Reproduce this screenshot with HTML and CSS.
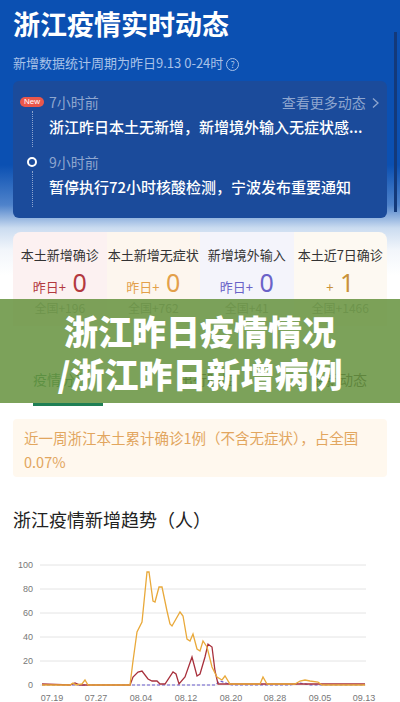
FILE: index.html
```html
<!DOCTYPE html>
<html lang="zh-CN">

<head>
    <meta charset="UTF-8">
    <meta name="viewport" content="width=device-width, initial-scale=1.0">
    <title>浙江疫情实时动态</title>
    <link rel="stylesheet" href="styles.css">
</head>

<body>

    <!-- Header with live updates -->
    <div class="hero">
        <h1 class="hero-title">浙江疫情实时动态</h1>
        <p class="hero-sub">新增数据统计周期为昨日9.13 0-24时 <span class="help">?</span></p>

        <div class="timeline">
            <div class="item">
                <div class="marker"><span class="badge-new">New</span></div>
                <div class="item-head">
                    <span class="time">7小时前</span>
                    <span class="more">查看更多动态
                        <svg width="9" height="12" viewBox="0 0 9 12"><path d="M2 1.5 L7 6 L2 10.5" fill="none" stroke="#8ea6cf" stroke-width="1.3"/></svg>
                    </span>
                </div>
                <div class="rail"></div>
                <div class="item-text">浙江昨日本土无新增，新增境外输入无症状感...</div>
            </div>
            <div class="item">
                <div class="marker"><span class="ring"></span></div>
                <div class="item-head">
                    <span class="time">9小时前</span>
                </div>
                <div class="rail"></div>
                <div class="item-text">暂停执行72小时核酸检测，宁波发布重要通知</div>
            </div>
        </div>

        <div class="stats">
            <div class="stat stat-red">
                <div class="stat-label">本土新增确诊</div>
                <div class="stat-value"><small>昨日+</small> 0</div>
                <div class="stat-nation">全国+196</div>
            </div>
            <div class="stat stat-orange">
                <div class="stat-label">本土新增无症状</div>
                <div class="stat-value"><small>昨日+</small> 0</div>
                <div class="stat-nation">全国+762</div>
            </div>
            <div class="stat stat-purple">
                <div class="stat-label">新增境外输入</div>
                <div class="stat-value"><small>昨日+</small> 0</div>
                <div class="stat-nation">全国+41</div>
            </div>
            <div class="stat stat-gold">
                <div class="stat-label">本土近7日确诊</div>
                <div class="stat-value"><small>+</small> 1</div>
                <div class="stat-nation">全国+1466</div>
            </div>
        </div>

        <div class="scrollbar"></div>
    </div>

    <!-- Tabs -->
    <div class="tabs">
        <span class="tab active">疫情分布</span>
        <span class="tab">出行防控</span>
        <span class="tab">最新动态</span>
    </div>

    <div class="notice">近一周浙江本土累计确诊1例（不含无症状），占全国0.07%</div>

    <!-- Trend chart -->
    <h2 class="chart-title">浙江疫情新增趋势（人）</h2>
    <svg class="chart" width="400" height="160" viewBox="0 0 400 160">
        <g stroke="#e4e4e4" stroke-width="1">
            <line x1="40" y1="16" x2="366" y2="16" />
            <line x1="40" y1="40" x2="366" y2="40" />
            <line x1="40" y1="64" x2="366" y2="64" />
            <line x1="40" y1="88" x2="366" y2="88" />
            <line x1="40" y1="112" x2="366" y2="112" />
            <line x1="40" y1="136" x2="366" y2="136" />
        </g>
        <g class="axis" text-anchor="end">
            <text x="33" y="19">100</text>
            <text x="33" y="43">80</text>
            <text x="33" y="67">60</text>
            <text x="33" y="91">40</text>
            <text x="33" y="115">20</text>
            <text x="33" y="139">0</text>
        </g>
        <g class="axis" text-anchor="middle">
            <text x="52" y="152">07.19</text>
            <text x="96" y="152">07.27</text>
            <text x="141" y="152">08.04</text>
            <text x="186" y="152">08.12</text>
            <text x="231" y="152">08.20</text>
            <text x="275" y="152">08.28</text>
            <text x="320" y="152">09.05</text>
            <text x="364" y="152">09.13</text>
        </g>
        <polyline fill="none" stroke="#6a5fd0" stroke-width="1.2" stroke-dasharray="3 2"
            points="42,136 215,136 220,132 226,134 232,136 290,136 300,134 310,136 365,136" />
        <polyline fill="none" stroke="#a8303c" stroke-width="1.3"
            points="42,135 70,136 75,134 80,136 130,136 133,128 138,123 142,122 148,130 152,132 157,132 160,135 165,135 173,123 176,125 179,135 185,128 192,108 197,127 200,125 205,108 208,95 212,98 215,122 218,135 365,135" />
        <polyline fill="none" stroke="#e9a93a" stroke-width="1.3"
            points="42,136 70,136 73,134 76,136 82,135 85,131 88,136 130,136 133,112 137,83 142,73 147,23 149,23 153,52 155,53 159,38 162,38 167,62 170,75 172,77 180,63 183,67 187,90 190,92 193,85 197,100 200,102 203,92 207,98 212,118 217,128 222,131 225,127 230,135 260,135 263,128 267,135 295,135 300,132 305,131 310,132 318,133 322,136 365,136" />
    </svg>

    <!-- Article title banner over the page -->
    <div class="banner">
        <div>浙江昨日疫情情况</div>
        <div>/浙江昨日新增病例</div>
    </div>

</body>

</html>
```

FILE: styles.css
```css
body {
    font-family: "Noto Sans CJK SC", "Noto Sans", sans-serif;
    background-color: #fff;
    color: #222;
    margin: 0;
    width: 400px;
    position: relative;
    overflow: hidden;
}

.hero {
    position: relative;
    padding: 8px 13px 0;
    background: linear-gradient(180deg, #0b50b2 0, #0b50b2 165px, #4f83cb 205px, #cbdcf0 228px, #f2f6fb 250px, #fff 275px);
}

.hero-title {
    margin: 0;
    font-size: 27px;
    line-height: 31px;
    font-weight: 700;
    color: #fff;
}

.hero-sub {
    margin: 15px 0 0;
    font-size: 13px;
    line-height: 18px;
    color: #a9c2e8;
}

.help {
    display: inline-block;
    width: 11px;
    height: 11px;
    border: 1px solid #a9c2e8;
    border-radius: 50%;
    font-size: 9px;
    line-height: 11px;
    text-align: center;
    vertical-align: 0;
}

.timeline {
    margin-top: 9px;
    padding: 12px 7px 11px 0;
    background-color: #1b4b9b;
    border-radius: 6px;
}

.item {
    display: grid;
    grid-template-columns: 36px 1fr;
    grid-template-rows: 18px auto;
}

.item + .item {
    margin-top: 6px;
}

.marker {
    display: flex;
    align-items: center;
    justify-content: center;
    padding-left: 2px;
}

.badge-new {
    display: inline-block;
    padding: 0 4px;
    height: 10px;
    background-color: #e9574b;
    border-radius: 5px;
    font-family: "Liberation Sans", sans-serif;
    font-size: 8px;
    line-height: 10px;
    color: #fff;
}

.ring {
    width: 6px;
    height: 6px;
    border: 2px solid #fff;
    border-radius: 50%;
}

.item-head {
    display: flex;
    justify-content: space-between;
    align-items: center;
    font-size: 14px;
    line-height: 18px;
    color: #8ea6cf;
}

.more svg {
    vertical-align: -1px;
    margin-left: 2px;
}

.rail {
    justify-self: center;
    margin-left: 2px;
    border-left: 1px dotted #8ea6cf;
}

.item-text {
    padding: 5px 0 9px;
    font-size: 15px;
    line-height: 22px;
    font-weight: 500;
    color: #fff;
    white-space: nowrap;
}

.stats {
    margin-top: 14px;
    display: grid;
    grid-template-columns: repeat(4, 1fr);
    border-radius: 8px 8px 0 0;
    overflow: hidden;
}

.stat {
    padding: 14px 0 10px;
    text-align: center;
}

.stat-label {
    font-size: 13px;
    line-height: 18px;
    color: #333;
    white-space: nowrap;
}

.stat-value {
    margin-top: 5px;
    font-family: "Noto Sans", sans-serif;
    font-size: 25px;
    line-height: 26px;
}

.stat-value small {
    font-family: "Noto Sans CJK SC", sans-serif;
    font-size: 13px;
}

.stat-nation {
    font-size: 12px;
    line-height: 16px;
    color: #999;
}

.stat-red {
    background-color: #fcf1f1;
    color: #b3393f;
}

.stat-orange {
    background-color: #fdf6ee;
    color: #e3a04a;
}

.stat-purple {
    background-color: #f4f4fb;
    color: #6a62c8;
}

.stat-gold {
    background-color: #fdf9f2;
    color: #c9923a;
}

.scrollbar {
    position: absolute;
    right: 3px;
    top: 32px;
    width: 3px;
    height: 180px;
    background-color: #13397a;
}

.tabs {
    display: flex;
    justify-content: space-between;
    padding: 43px 33px 0;
    font-size: 14px;
    line-height: 20px;
    color: #333;
}

.tab {
    padding-bottom: 14px;
}

.tab.active {
    color: #1f7f55;
    width: 70px;
    border-bottom: 3px solid #1f7f55;
}

.notice {
    margin: 13px 13px 0;
    padding: 7px 11px 3px;
    background-color: #fff8ee;
    border-radius: 4px;
    font-size: 14.5px;
    line-height: 24px;
    color: #e2a65e;
}

.chart-title {
    margin: 30px 13px 0;
    font-size: 18px;
    line-height: 24px;
    font-weight: 400;
    color: #222;
}

.chart {
    display: block;
    margin-top: 18px;
}

.axis {
    font-family: "Liberation Sans", sans-serif;
    font-size: 9px;
    fill: #777;
}

.banner {
    position: absolute;
    left: 0;
    top: 299px;
    width: 400px;
    height: 104px;
    padding-top: 10px;
    box-sizing: border-box;
    background-color: rgba(103, 147, 63, 0.86);
    text-align: center;
    font-size: 34px;
    line-height: 43px;
    font-weight: 900;
    color: #fff;
}
```
